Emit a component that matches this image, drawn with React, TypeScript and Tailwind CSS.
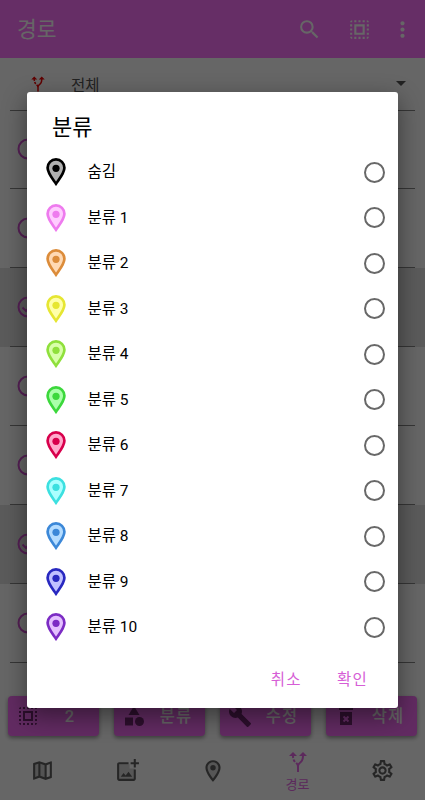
import type { ReactNode } from 'react'
import { MdOutlineSettings } from 'react-icons/md'

const categories = [
  { name: '숨김', color: '#000000', fill: '#b0b0b0' },
  { name: '분류 1', color: '#ee7bee', fill: '#ffccff' },
  { name: '분류 2', color: '#dc8c3a', fill: '#ffd9b3' },
  { name: '분류 3', color: '#e6e632', fill: '#ffffaa' },
  { name: '분류 4', color: '#8fe03c', fill: '#d8ffaa' },
  { name: '분류 5', color: '#3cd83c', fill: '#aaffaa' },
  { name: '분류 6', color: '#d8004c', fill: '#ffaacc' },
  { name: '분류 7', color: '#3ce0e0', fill: '#aaffff' },
  { name: '분류 8', color: '#3c88d8', fill: '#b4dcff' },
  { name: '분류 9', color: '#2828c0', fill: '#c0c0ff' },
  { name: '분류 10', color: '#7c2cc4', fill: '#e4c0ff' },
]

const routes = [false, false, true, false, false, true, false]

function Icon({ className = '', children }: { className?: string; children: ReactNode }) {
  return (
    <svg viewBox="0 0 24 24" fill="currentColor" className={`shrink-0 ${className}`}>
      {children}
    </svg>
  )
}

function SelectAll({ className }: { className: string }) {
  return (
    <Icon className={className}>
      <path d="M3 5h2V3c-1.1 0-2 .9-2 2zm0 8h2v-2H3v2zm4 8h2v-2H7v2zM3 9h2V7H3v2zm10-6h-2v2h2V3zm6 0v2h2c0-1.1-.9-2-2-2zM5 21v-2H3c0 1.1.9 2 2 2zm-2-4h2v-2H3v2zM9 3H7v2h2V3zm2 18h2v-2h-2v2zm8-8h2v-2h-2v2zm0 8c1.1 0 2-.9 2-2h-2v2zm0-12h2V7h-2v2zm0 8h2v-2h-2v2zm-4 4h2v-2h-2v2zm0-16h2V3h-2v2zM7 17h10V7H7v10zm2-8h6v6H9V9z" />
    </Icon>
  )
}

function AltRoute({ className }: { className: string }) {
  return (
    <Icon className={className}>
      <path d="M9.78 11.16l-1.42 1.42c-.68-.69-1.34-1.58-1.79-2.94l1.94-.49c.32.89.77 1.5 1.27 2.01zM11 6 7 2 3 6h3.020c.02.81.08 1.540.19 2.170l1.940-.49C8.080 7.200 8.030 6.630 8.020 6H11zm10 0-4-4-4 4h2.990c-.1 3.680-1.280 4.750-2.540 5.880-.5.440-1.010.92-1.450 1.550-.34-.49-.73-.88-1.130-1.240L9.460 13.600C10.390 14.450 11 15.140 11 17v5h2v-5c0-2.020.71-2.660 1.790-3.630 1.380-1.240 3.080-2.780 3.200-7.370H21z" />
    </Icon>
  )
}

function Pin({ color, fill, className = '' }: { color: string; fill: string; className?: string }) {
  return (
    <svg viewBox="0 0 20 28" className={`shrink-0 ${className}`}>
      <path
        d="M10 1.400C5.300 1.400 1.600 5.100 1.600 9.800 1.600 15.300 7 21.300 10 25.700c3-4.400 8.400-10.400 8.400-15.900 0-4.700-3.700-8.400-8.400-8.400z"
        fill={fill}
        stroke={color}
        strokeWidth="2.700"
      />
      <circle cx="10" cy="10.300" r="3.600" fill={color} />
    </svg>
  )
}

function RouteRow({ selected }: { selected: boolean }) {
  return (
    <div className={`flex h-[78.9px] flex-col justify-end ${selected ? 'bg-[#e4e4e4]' : ''}`}>
      <div className="flex flex-1 items-center pl-[17px]">
        <svg viewBox="0 0 22 22" className="size-[22px]" fill="none" stroke="#d550d5" strokeWidth="2">
          <circle cx="11" cy="11" r="9.500" />
          {selected && <path d="m5.500 11.500 3.500 3.500 7.500-8" />}
        </svg>
      </div>
      <div className="mx-2.5 h-px bg-[#888]" />
    </div>
  )
}

function ActionButton({ label, children }: { label: string; children: ReactNode }) {
  return (
    <button className="flex h-10 flex-1 items-center rounded-[4px] bg-[#f56cf5] pl-2 text-[#702670] shadow-[0_2px_4px_rgba(0,0,0,0.4)]">
      {children}
      <span className="flex-1 pt-[2px] pl-px text-center text-[16.5px] font-medium tracking-[1px] text-white">{label}</span>
    </button>
  )
}

function CategoryDialog() {
  return (
    <div className="flex h-[616px] w-[370.5px] flex-col rounded-[3px] bg-white shadow-[0_8px_24px_rgba(0,0,0,0.45)]">
      <h2 className="mt-[20.5px] pl-[25px] text-[22px] leading-[30px] text-black">분류</h2>
      <ul className="mt-[7px]">
        {categories.map((c) => (
          <li key={c.name} className="flex h-[45.5px] items-center pr-[12.5px] pl-[18.5px]">
            <Pin color={c.color} fill={c.fill} className="h-7 w-5" />
            <span className="ml-[22px] flex-1 pt-px text-[15.5px] text-black">{c.name}</span>
            <span className="size-[21px] rounded-full border-2 border-[#686868]" />
          </li>
        ))}
      </ul>
      <div className="mt-[14.5px] flex justify-end gap-[35px] pr-[29.5px] text-[15.5px] leading-[30px] tracking-[1.3px] text-[#d65ed6]">
        <button>취소</button>
        <button>확인</button>
      </div>
    </div>
  )
}

export default function App() {
  return (
    <div className="relative h-[800px] w-[425px] overflow-hidden bg-white font-['Roboto','Noto_Sans_CJK_KR',sans-serif]">
      <div className="flex h-full flex-col">
        <header className="flex h-[58px] shrink-0 items-center bg-[#ff73ff] pl-[17px] text-white">
          <h1 className="flex-1 pt-[2px] text-[21.5px]">경로</h1>
          <Icon className="mr-[25px] size-[25px]">
            <path d="M15.500 14h-.79l-.28-.27A6.471 6.471 0 0 0 16 9.500 6.500 6.500 0 1 0 9.500 16c1.610 0 3.090-.59 4.230-1.570l.27.280v.79l5 4.990L20.490 19l-4.990-5zm-6 0C7.010 14 5 11.990 5 9.500S7.010 5 9.500 5 14 7.010 14 9.500 11.990 14 9.500 14z" />
          </Icon>
          <SelectAll className="mr-[18px] size-[25px]" />
          <Icon className="mr-[10px] size-[25px]">
            <path d="M12 8c1.100 0 2-.9 2-2s-.9-2-2-2-2 .9-2 2 .9 2 2 2zm0 2c-1.100 0-2 .9-2 2s.9 2 2 2 2-.9 2-2-.9-2-2-2zm0 6c-1.100 0-2 .9-2 2s.9 2 2 2 2-.9 2-2-.9-2-2-2z" />
          </Icon>
        </header>

        <div className="mx-2.5 flex h-[52.5px] shrink-0 items-center border-b border-[#888] text-[#555]">
          <AltRoute className="ml-[19px] size-[18px] text-[#f00000]" />
          <span className="ml-[24px] flex-1 pt-[5px] text-[15.5px]">전체</span>
          <span className="mr-[9.5px] border-x-[5px] border-t-[5px] border-x-transparent border-t-[#555]" />
        </div>

        <div className="h-[586.5px] shrink-0 overflow-hidden">
          {routes.map((selected, i) => (
            <RouteRow key={i} selected={selected} />
          ))}
        </div>

        <div className="-mt-px flex shrink-0 gap-[15px] px-2">
          <ActionButton label="2">
            <SelectAll className="size-6" />
          </ActionButton>
          <ActionButton label="분류">
            <Icon className="size-6">
              <path d="m12 2-5.500 9h11z" />
              <circle cx="17.500" cy="17.500" r="4.500" />
              <path d="M3 13.500h8v8H3z" />
            </Icon>
          </ActionButton>
          <ActionButton label="수정">
            <Icon className="size-6">
              <path d="m22.700 19-9.100-9.100c.9-2.300.4-5-1.500-6.900-2-2-5-2.400-7.400-1.300L9 6 6 9 1.600 4.700C.4 7.100.9 10.100 2.900 12.100c1.900 1.900 4.600 2.400 6.900 1.500l9.100 9.100c.4.4 1 .4 1.400 0l2.300-2.300c.5-.4.5-1.100.1-1.400z" />
            </Icon>
          </ActionButton>
          <ActionButton label="삭제">
            <Icon className="size-6">
              <path d="M6 8v13h12V8zm9.200 8.800-1.400 1.400L12 16.400l-1.800 1.800-1.400-1.400 1.800-1.800-1.800-1.800 1.400-1.400 1.800 1.800 1.800-1.800 1.400 1.400-1.800 1.800zM15.500 4l-1-1h-5l-1 1H5v2h14V4z" />
            </Icon>
          </ActionButton>
        </div>

        <nav className="mt-[5px] grid h-[59px] shrink-0 grid-cols-5 place-items-center text-[#606060]">
          <Icon className="size-[25px]">
            <path d="M3 5.700 9 3.500v14.800l-6 2.200zM9 3.500l6 2.200v14.800l-6-2.200z" opacity=".3" />
            <path d="m20.500 3-.16.030L15 5.100 9 3 3.360 4.900c-.21.070-.36.250-.36.480V20.500c0 .28.220.5.500.5l.16-.03L9 18.900l6 2.100 5.640-1.900c.21-.07.360-.25.360-.48V3.500c0-.28-.22-.5-.5-.5zM10 5.470l4 1.400v11.660l-4-1.400V5.470zm-5 .99 3-1.010v11.700l-3 1.160V6.460zm14 11.080-3 1.010V6.860l3-1.160v11.840z" />
          </Icon>
          <Icon className="size-[25px]">
            <path d="M3 6h11v4h5v11H3z" opacity=".25" />
            <path d="M18 20H4V6h9V4H4c-1.100 0-2 .9-2 2v14c0 1.100.9 2 2 2h14c1.100 0 2-.9 2-2v-9h-2v9zm-7.790-3.170-1.960-2.360L5.500 18h11l-3.540-4.710zM20 4V1h-2v3h-3v2h3v3h2V6h3V4z" />
          </Icon>
          <Icon className="size-[26px]">
            <path d="M12 3a6 6 0 0 0-6 6c0 4.500 6 12 6 12s6-7.500 6-12a6 6 0 0 0-6-6z" opacity=".25" />
            <path d="M12 2C8.130 2 5 5.130 5 9c0 5.250 7 13 7 13s7-7.750 7-13c0-3.870-3.130-7-7-7zM7 9c0-2.760 2.240-5 5-5s5 2.240 5 5c0 2.880-2.880 7.190-5 9.880C9.920 16.210 7 11.850 7 9z" />
            <circle cx="12" cy="9" r="2.500" />
          </Icon>
          <div className="flex flex-col items-center pt-[4px] text-[#e666e6]">
            <AltRoute className="size-6" />
            <span className="text-[13px] leading-[22px]">경로</span>
          </div>
          <MdOutlineSettings className="size-[25px]" />
        </nav>
      </div>

      <div className="absolute inset-0 bg-black/60 pt-[92px] pl-[27px]">
        <CategoryDialog />
      </div>
    </div>
  )
}
